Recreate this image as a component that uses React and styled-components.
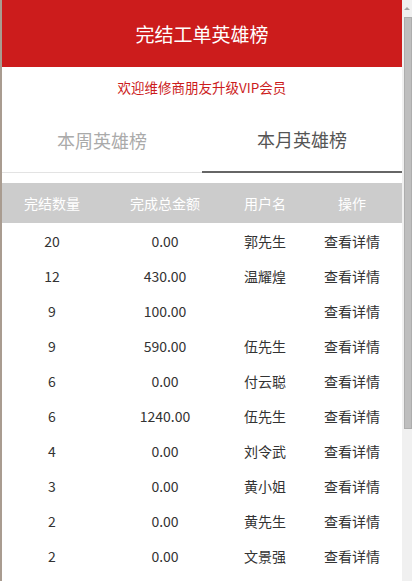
import React from "react";
import styled, { createGlobalStyle } from "styled-components";

const GlobalStyle = createGlobalStyle`
  html, body {
    margin: 0;
    padding: 0;
    overflow: hidden;
    background: #fff;
  }
  body {
    font-family: "Noto Sans CJK SC", "Noto Sans", sans-serif;
  }
`;

const Screen = styled.div`
  display: flex;
  width: 412px;
  height: 581px;
  overflow: hidden;
`;

const Page = styled.div`
  width: 400px;
  border-left: 2px solid #a99c90;
  display: flex;
  flex-direction: column;
  background: #fff;
  overflow: hidden;
  & > * {
    flex-shrink: 0;
  }
`;

const Header = styled.div`
  height: 67px;
  background: #cc1c1c;
  color: #fff;
  font-size: 19px;
  display: flex;
  align-items: center;
  justify-content: center;
`;

const Notice = styled.div`
  height: 40px;
  display: flex;
  align-items: center;
  justify-content: center;
  color: #cc1c1c;
  font-size: 13.5px;
`;

const Tabs = styled.div`
  display: flex;
  height: 66px;
`;

const Tab = styled.div`
  flex: 1;
  display: flex;
  align-items: center;
  justify-content: center;
  font-size: 18px;
  color: ${({ $active }) => ($active ? "#555" : "#aaa")};
  border-bottom: ${({ $active }) => ($active ? "2px solid #666" : "1px solid #e3e3e3")};
  box-sizing: border-box;
`;

const Table = styled.div`
  margin-top: 10px;
  display: flex;
  flex-direction: column;
`;

const Row = styled.div`
  display: grid;
  grid-template-columns: 100px 126px 74px 100px;
  height: ${({ $head }) => ($head ? "40px" : "35px")};
  flex-shrink: 0;
  background: ${({ $head }) => ($head ? "#cccccc" : "transparent")};
  color: ${({ $head }) => ($head ? "#fff" : "#333")};
  font-size: 14px;
`;

const Cell = styled.div`
  display: flex;
  align-items: center;
  justify-content: center;
  white-space: nowrap;
`;

const Scrollbar = styled.div`
  width: 10px;
  background: #f0f0f0;
  display: flex;
  flex-direction: column;
  align-items: center;
`;

const ArrowUp = styled.div`
  margin-top: 7px;
  width: 0;
  height: 0;
  border-left: 3px solid transparent;
  border-right: 3px solid transparent;
  border-bottom: 3px solid #a3a3a3;
`;

const Thumb = styled.div`
  margin-top: 7px;
  margin-left: 2px;
  width: 8px;
  height: 412px;
  box-sizing: border-box;
  background: #bebebe;
  border: 1px solid #adadad;
`;

const rows = [
  ["20", "0.00", "郭先生"],
  ["12", "430.00", "温耀煌"],
  ["9", "100.00", ""],
  ["9", "590.00", "伍先生"],
  ["6", "0.00", "付云聪"],
  ["6", "1240.00", "伍先生"],
  ["4", "0.00", "刘令武"],
  ["3", "0.00", "黄小姐"],
  ["2", "0.00", "黄先生"],
  ["2", "0.00", "文景强"],
];

const App = () => {
  return (
    <Screen>
      <GlobalStyle />
      <Page>
        <Header>完结工单英雄榜</Header>
        <Notice>欢迎维修商朋友升级VIP会员</Notice>
        <Tabs>
          <Tab>本周英雄榜</Tab>
          <Tab $active>本月英雄榜</Tab>
        </Tabs>
        <Table>
          <Row $head>
            <Cell>完结数量</Cell>
            <Cell>完成总金额</Cell>
            <Cell>用户名</Cell>
            <Cell>操作</Cell>
          </Row>
          {rows.map(([count, amount, name], i) => (
            <Row key={i}>
              <Cell>{count}</Cell>
              <Cell>{amount}</Cell>
              <Cell>{name}</Cell>
              <Cell>查看详情</Cell>
            </Row>
          ))}
        </Table>
      </Page>
      <Scrollbar>
        <ArrowUp />
        <Thumb />
      </Scrollbar>
    </Screen>
  );
};

export default App;
